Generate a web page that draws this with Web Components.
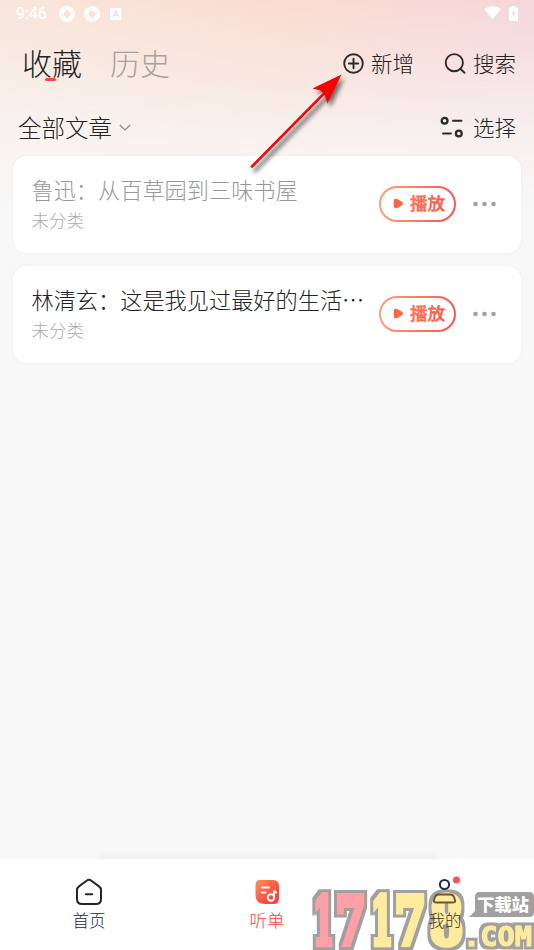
<!DOCTYPE html>
<html lang="zh-CN">
<head>
<meta charset="utf-8">
<title>收藏</title>
<style>
html,body{margin:0;height:100%;overflow:hidden}
body{font-family:"Noto Sans CJK SC",sans-serif;font-weight:300;color:#222}
</style>
</head>
<body>
<listen-app></listen-app>
<script>
function define(name, html, init) {
  customElements.define(name, class extends HTMLElement {
    constructor() {
      super();
      this.attachShadow({mode: 'open'}).innerHTML = '<style>*{box-sizing:border-box}svg{display:block;flex:none;overflow:visible}</style>' + html;
    }
    connectedCallback() { if (init) init(this, this.shadowRoot); }
  });
}

define('app-glyph', `<style>:host{display:block}</style>
<svg width="16" height="16" viewBox="0 0 16 16"><circle cx="8" cy="8" r="8" fill="#fff"/><path d="M8 3.800 12.200 8 8 12.200 3.800 8z" fill="#f9e2d9"/><path d="M8 4.300 4.600.9M11.700 8l3.400-3.400M8 11.700l3.400 3.400M4.300 8 .9 11.400" stroke="#f9e2d9" stroke-width="1"/></svg>`);

define('status-bar', `<style>
:host{display:flex;height:28px;align-items:center;padding:0 14px 0 16px;color:#fff;font:400 16px/28px Roboto,sans-serif}
.gap{flex:1}.apps{display:flex;gap:8.500px;margin-left:12px;align-items:center}.sys{display:flex;gap:8px;align-items:center;margin-top:-2px}
span{width:31px;white-space:nowrap;-webkit-text-stroke:.2px #fff}
</style><span>9:46</span><div class="apps"><app-glyph></app-glyph><app-glyph></app-glyph>
<svg width="12" height="12" viewBox="0 0 12 12" style="margin-left:2px"><rect width="11.5" height="12" rx="1" fill="#fff"/><path d="M3 9 5.800 3 8.600 9M4 7.200h3.600" fill="none" stroke="#f9dfd5" stroke-width="1.400"/></svg>
</div><div class="gap"></div><div class="sys">
<svg width="17" height="14" viewBox="0 0 17 14"><path d="M0 3Q8.500-2.500 17 3L8.500 13.500z" fill="#fff"/></svg>
<svg width="9" height="15" viewBox="0 0 9 15" style="margin-right:2px"><path d="M2.500 0h4v1.500H9V15H0V1.500h2.500z" fill="#fff"/><path d="M5.300 3.500 2.800 8H4.300L3.700 11.500 6.300 7H4.800z" fill="#f4d6db"/></svg></div>`);

define('icon-action', `<style>
:host{display:flex;align-items:center;gap:7px;font-size:21.500px;line-height:32px;color:#222;white-space:nowrap}
span{margin-top:-1px}
</style><slot name="icon"></slot><span><slot></slot></span>`);

define('page-head', `<style>
:host{display:block}
.tabs{display:flex;height:72px;align-items:center;padding:0 18px 0 22px;font-size:30px}
.tab{position:relative;margin:-4px 28px 0 0;white-space:nowrap;line-height:40px;width:60px}
.off{color:#aaa19d}
.on:after{content:"";position:absolute;left:23px;top:36px;width:11px;height:3px;border-radius:2px;background:#ff4540}
.gap{flex:1}
.tabs icon-action{margin-top:-1px}
.tabs icon-action+icon-action{margin-left:30px}
.filter{display:flex;height:54px;align-items:center;padding:0 18px}
.all{font-size:23.500px;line-height:34px;margin:-1px 7px 0 0}
svg{fill:none;stroke:#2b2b2b}
</style><div class="tabs"><div class="tab on">收藏</div><div class="tab off">历史</div><div class="gap"></div>
<icon-action><svg slot="icon" width="21" height="21" viewBox="0 0 21 21" stroke-width="1.900"><circle cx="10.500" cy="10.500" r="9.300"/><path d="M10.500 5.800v9.400M5.800 10.500h9.400" stroke-linecap="round"/></svg>新增</icon-action>
<icon-action><svg slot="icon" width="22" height="21" viewBox="0 0 22 21" stroke-width="1.900"><circle cx="10.300" cy="9.700" r="8.600"/><path d="m16.300 15.800 4.200 4" stroke-linecap="round"/></svg>搜索</icon-action></div>
<div class="filter"><span class="all">全部文章</span><svg width="12" height="8" viewBox="0 0 12 8" stroke-width="1.100" style="stroke:#8b8784;margin-top:2px"><path d="m.8 1 5.200 5 5.200-5"/></svg><div class="gap"></div>
<icon-action><svg slot="icon" style="margin-right:2px" width="24" height="22" viewBox="0 0 24 22" stroke-width="2.300"><circle cx="4.600" cy="4.800" r="2.900"/><path d="M13 4.800h8.500M3 17.500h8" stroke-linecap="round" stroke-width="1.900"/><circle cx="18.800" cy="17.500" r="2.900"/></svg>选择</icon-action></div>`);

define('play-button', `<style>
:host{display:flex;width:77px;height:36px;border:2px solid transparent;border-radius:18px;background:linear-gradient(#fff,#fff) padding-box,linear-gradient(100deg,#ffa27c,#fb5050) border-box;align-items:center;padding-left:12px;gap:6px;box-sizing:border-box}
b{font-size:17.500px;font-weight:500;line-height:26px;margin-top:-2px;background:linear-gradient(100deg,#ff7a55,#fb5248);-webkit-background-clip:text;color:transparent;-webkit-text-stroke:.3px #fd6650;white-space:nowrap}
</style><svg width="11" height="11" viewBox="0 0 11 11"><path d="M1.800.8Q4 0 9.500 4.300q1.600 1.200 0 2.400Q4 11 1.800 10.200.6 9.800.7 5.500.6 1.200 1.800.8z" fill="#ff6549"/></svg><b>播放</b>`);

define('article-card', `<style>
:host{display:flex;height:97px;border-radius:14px;background:#fff;box-shadow:0 0 4px #0000000b;padding:17px 25px 0 18.500px;box-sizing:border-box}
.text{flex:1;white-space:nowrap;min-width:0}
.title{font-size:22.200px;line-height:32px;color:#222}
:host([read]) .title{color:#999}
.sub{font-size:17.500px;line-height:26px;color:#aaa;margin-top:2px}
play-button{margin-top:13px;flex:none}
svg{margin:28px 0 0 17px}
</style><div class="text"><div class="title"><slot></slot></div><div class="sub">未分类</div></div><play-button></play-button>
<svg width="23" height="6" viewBox="0 0 23 6" fill="#a0a0a0"><circle cx="2.500" cy="3" r="2.300"/><circle cx="11.500" cy="3" r="2.300"/><circle cx="20.500" cy="3" r="2.300"/></svg>`);

define('tab-item', `<style>
:host{display:flex;flex:1;flex-direction:column;align-items:center;padding-top:20px;font-size:16.500px;line-height:24px;color:#18244a;position:relative;z-index:2}
:host([active]){color:#ff3d3d;font-size:17.500px}
:host([mine]){color:#3d3823}
span{margin-top:3px;white-space:nowrap}
</style><slot name="icon"></slot><span><slot></slot></span>`);

define('tab-bar', `<style>
:host{display:flex;height:91px;background:#fff}
.shade{position:absolute;left:100px;right:98px;bottom:91px;height:8px;background:linear-gradient(#f8f8f800,#f1f1f1)}
</style><div class="shade"></div>
<tab-item><svg slot="icon" width="26" height="26" viewBox="0 0 26 26" fill="none" stroke="#262626" stroke-width="2" stroke-linecap="round" stroke-linejoin="round"><path d="M10.600 1.700Q13-.1 15.400 1.700L23 7.400Q25 9 25 11v9q0 5-5 5H6q-5 0-5-5v-9q0-2 2-3.600z"/><path d="M9.800 15.300h6.400"/></svg>首页</tab-item>
<tab-item active><svg slot="icon" width="24" height="26" viewBox="0 0 24 26"><defs><linearGradient id="g" x2="1" y2="1"><stop stop-color="#ff9159"/><stop offset=".65" stop-color="#fc4d42"/><stop offset="1" stop-color="#fa3c44"/></linearGradient></defs><path d="M5 1h13q6 0 6 6v12q0 6-5 6h-9Q.5 25 .5 16V6Q.5 1 5 1z" fill="url(#g)"/><path d="M7 8.500h7M7 13.500h3.500" stroke="#fff" stroke-width="1.900" stroke-linecap="round"/><circle cx="16" cy="18.500" r="3.200" fill="none" stroke="#fff" stroke-width="2"/><path d="M19 18.500v-7.300q.5 2 3 2.700" fill="none" stroke="#fff" stroke-width="1.900"/></svg>听单</tab-item>
<tab-item mine><svg slot="icon" width="26" height="26" viewBox="0 0 26 26" fill="none" stroke-width="2"><circle cx="12.500" cy="5.500" r="4.600" stroke="#202c4e"/><path d="M6.500 15.500h12q2.500 0 3.500 2.500l1 3q1 2.500-2.500 2.500h-16Q1 23.500 2 21l1-3q1-2.500 3.500-2.500z" stroke="#62592e"/><circle cx="24.500" cy="1" r="3.500" fill="#fa5050"/></svg>我的</tab-item>`);

define('site-mark', `<style>
:host{position:absolute;left:300px;top:880px;width:234px;height:70px;z-index:1}
text{vector-effect:non-scaling-stroke;stroke-linejoin:miter}
.d{font:700 72px "DejaVu Serif",serif;filter:url(#outline)}
.d text{stroke-width:5px}
.c{font:700 27px "DejaVu Sans Mono",monospace;stroke:#ffeb9d;stroke-width:1px;filter:url(#outline)}
.l{font:900 17.500px "Noto Sans CJK SC",sans-serif;fill:#fff}
</style><svg width="234" height="70" viewBox="0 0 234 70">
<defs><filter id="outline" filterUnits="userSpaceOnUse" x="0" y="0" width="234" height="70"><feMorphology in="SourceAlpha" operator="dilate" radius="3" result="o"/><feFlood flood-color="#a0a0a0"/><feComposite in2="o" operator="in" result="g"/><feMerge><feMergeNode in="g"/><feMergeNode in="SourceGraphic"/></feMerge></filter></defs>
<g class="d"><text data-box="16 16 15.500 48" fill="#ffa0a7" stroke="#ffa0a7">1</text><text data-box="38 16 26 48" fill="#ffa0a7" stroke="#ffa0a7">7</text><text data-box="74 16 16.500 48" fill="#ffeb9d" stroke="#ffeb9d">1</text><text data-box="97 16 27 48" fill="#ffeb9d" stroke="#ffeb9d">7</text><text data-box="132 16 29 48" fill="#ffeb9d" stroke="#ffeb9d">8</text></g>
<path d="M180 12h49q5 0 5 5v15q0 5-5 5H169l6-6V17q0-5 5-5z" fill="#a0a0a0"/>
<text class="l" x="177" y="31" textLength="52">下载站</text>
<text class="c" x="163" y="66" fill="#ffeb9d" textLength="69" lengthAdjust="spacingAndGlyphs">.COM</text></svg>`,
(host, root) => {
  // Horizontal ink extents of each digit, in units of the 72px bold serif face.
  const ink = {1: [7, 45], 7: [4, 47], 8: [3, 47]};
  root.querySelectorAll('[data-box]').forEach(t => {
    const [x, y, w, h] = t.dataset.box.split(' ').map(Number);
    const [a, b] = ink[t.textContent];
    const s = w / (b - a);
    t.setAttribute('transform', `translate(${x - a * s} ${y + h}) scale(${s} ${h / 52.5})`);
  });
});

define('guide-arrow', `<style>
:host{position:absolute;left:245px;top:66px;width:110px;height:110px;z-index:3;filter:drop-shadow(3px 4px 2px #0008)}
</style><svg width="110" height="110" viewBox="0 0 110 110"><path d="m7 100.500 75-76" stroke="#fff" stroke-width="4" stroke-linecap="round" opacity=".75"/><path d="m7 100.500 75-76" stroke="#f60808" stroke-width="2.700" stroke-linecap="round"/><path d="M96.500 8.500 82.500 37.500 80 29.500 75.500 24.500 67.500 22.500z" fill="#f60000"/></svg>`);

define('listen-app', `<style>
:host{display:flex;flex-direction:column;position:relative;width:534px;height:950px;overflow:hidden;background:linear-gradient(#f8f8f800 0,#f8f8f850 65px,#f8f8f8b8 130px,#f8f8f8 210px),linear-gradient(100deg,#f8e6dc 0,#fadcd0 42%,#f5d7da 75%,#f4d7de 100%)}
main{display:flex;flex-direction:column;gap:13px;padding:1.500px 13px 0;flex:1}
</style><status-bar></status-bar><page-head></page-head>
<main><article-card read>鲁迅：从百草园到三味书屋</article-card><article-card>林清玄：这是我见过最好的生活…</article-card></main>
<tab-bar></tab-bar><site-mark></site-mark><guide-arrow></guide-arrow>`);
</script>
</body>
</html>
